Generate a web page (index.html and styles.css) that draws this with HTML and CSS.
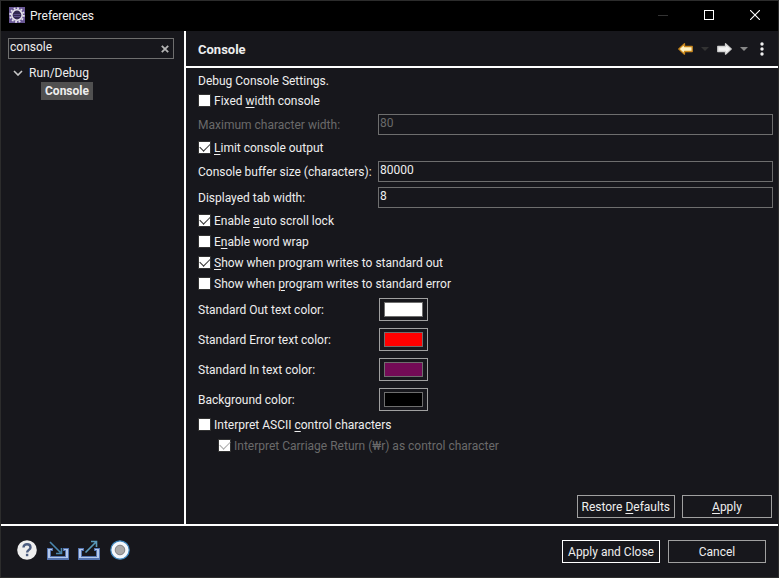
FILE: index.html
```html
<!DOCTYPE html>
<html lang="en">
<head>
    <meta charset="UTF-8">
    <meta name="viewport" content="width=device-width, initial-scale=1.0">
    <title>Preferences</title>
    <link rel="stylesheet" href="styles.css">
</head>
<body>
    <div class="window">
        <header class="title-bar">
            <svg class="app-icon" width="16" height="16" viewBox="0 0 16 16">
                <rect width="16" height="16" fill="#6a5896"/>
                <circle cx="8" cy="8" r="6.8" fill="none" stroke="#e8e6ee" stroke-width="1.8" stroke-dasharray="1.8 1.76"/>
                <circle cx="8" cy="8" r="5.2" fill="#33294f" stroke="#e8e6ee" stroke-width="1.6"/>
                <path d="M4.5 7.5h7M4.5 9.5h7" stroke="#5d5088"/>
            </svg>
            <h1>Preferences</h1>
            <div class="window-buttons">
                <button type="button" aria-label="Minimize" disabled>
                    <svg width="10" height="10" viewBox="0 0 10 10"><path d="M0 5.5h10" stroke="#333"/></svg>
                </button>
                <button type="button" aria-label="Maximize">
                    <svg width="10" height="10" viewBox="0 0 10 10"><rect x=".5" y=".5" width="9" height="9" fill="none" stroke="#fff"/></svg>
                </button>
                <button type="button" aria-label="Close">
                    <svg width="10" height="10" viewBox="0 0 10 10"><path d="M0 0l10 10M10 0L0 10" stroke="#fff" stroke-width="1.1"/></svg>
                </button>
            </div>
        </header>

        <div class="content">
            <nav class="sidebar">
                <div class="filter">
                    <input type="text" value="console" aria-label="Filter preferences">
                    <button type="button" aria-label="Clear">
                        <svg width="8" height="8" viewBox="0 0 8 8"><path d="M.8 .8l6.4 6.4M7.2 .8L.8 7.2" stroke="#b4b4b4" stroke-width="1.8"/></svg>
                    </button>
                </div>
                <ul class="tree">
                    <li>
                        <a href="#" class="tree-item">
                            <svg width="10" height="6" viewBox="0 0 10 6"><path d="M1 1l4 4 4-4" fill="none" stroke="#c8c8c8" stroke-width="1.6"/></svg>
                            Run/Debug
                        </a>
                        <ul>
                            <li><a href="#" class="tree-item selected">Console</a></li>
                        </ul>
                    </li>
                </ul>
            </nav>

            <main class="page">
                <div class="page-header">
                    <h2>Console</h2>
                    <div class="toolbar">
                        <button type="button" aria-label="Back">
                            <svg width="15" height="12" viewBox="0 0 15 12"><path d="M.8 6L6.5.8v2.7h7.7v5H6.5v2.7z" fill="#fff3c4" stroke="#c8861c" stroke-width="1.3" stroke-linejoin="round"/></svg>
                        </button>
                        <button type="button" aria-label="Back history" disabled>
                            <svg width="8" height="4" viewBox="0 0 8 4"><path d="M0 0h8L4 4z" fill="#333"/></svg>
                        </button>
                        <button type="button" aria-label="Forward">
                            <svg width="15" height="12" viewBox="0 0 15 12"><path d="M14.2 6L8.5.8v2.7H.8v5h7.7v2.7z" fill="#f4f4f4" stroke="#d0d0d0" stroke-width="1.3" stroke-linejoin="round"/></svg>
                        </button>
                        <button type="button" aria-label="Forward history">
                            <svg width="8" height="4" viewBox="0 0 8 4"><path d="M0 0h8L4 4z" fill="#888"/></svg>
                        </button>
                        <button type="button" class="menu" aria-label="Menu">
                            <svg width="4" height="14" viewBox="0 0 4 14" fill="#f0f0f0"><circle cx="2" cy="2" r="1.7"/><circle cx="2" cy="7" r="1.7"/><circle cx="2" cy="12" r="1.7"/></svg>
                        </button>
                    </div>
                </div>

                <form class="settings">
                    <p>Debug Console Settings.</p>
                    <label class="check"><input type="checkbox"><span>Fixed <u>w</u>idth console</span></label>
                    <div class="field disabled">
                        <label for="max-width">Maximum character width:</label>
                        <input type="text" id="max-width" value="80" disabled>
                    </div>
                    <label class="check"><input type="checkbox" checked><span><u>L</u>imit console output</span></label>
                    <div class="field">
                        <label for="buffer-size">Console buffer size (characters):</label>
                        <input type="text" id="buffer-size" value="80000">
                    </div>
                    <div class="field">
                        <label for="tab-width">Displayed tab width:</label>
                        <input type="text" id="tab-width" value="8">
                    </div>
                    <label class="check"><input type="checkbox" checked><span>Enable <u>a</u>uto scroll lock</span></label>
                    <label class="check"><input type="checkbox"><span>E<u>n</u>able word wrap</span></label>
                    <label class="check"><input type="checkbox" checked><span><u>S</u>how when program writes to standard out</span></label>
                    <label class="check"><input type="checkbox"><span>Show when <u>p</u>rogram writes to standard error</span></label>
                    <div class="field color">
                        <label for="out-color">Standard Out text color:</label>
                        <input type="color" id="out-color" value="#ffffff">
                    </div>
                    <div class="field color">
                        <label for="err-color">Standard Error text color:</label>
                        <input type="color" id="err-color" value="#ff0000">
                    </div>
                    <div class="field color">
                        <label for="in-color">Standard In text color:</label>
                        <input type="color" id="in-color" value="#730b56">
                    </div>
                    <div class="field color">
                        <label for="bg-color">Background color:</label>
                        <input type="color" id="bg-color" value="#000000">
                    </div>
                    <label class="check"><input type="checkbox"><span>Interpret ASCII <u>c</u>ontrol characters</span></label>
                    <label class="check nested disabled"><input type="checkbox" checked disabled><span>Interpret Carriage Return (₩r) as control character</span></label>
                </form>

                <div class="page-buttons">
                    <button type="button" class="btn">Restore <u>D</u>efaults</button>
                    <button type="button" class="btn"><u>A</u>pply</button>
                </div>
            </main>
        </div>

        <footer class="bottom-bar">
            <div class="tools">
                <button type="button" aria-label="Help">
                    <svg width="22" height="22" viewBox="0 0 22 22">
                        <circle cx="11" cy="11" r="9.8" fill="#eee"/>
                        <path d="M7.5 8.4c0-4.3 7-4.3 7 0 0 2.4-3.4 2.6-3.4 5.2" fill="none" stroke="#4c5d80" stroke-width="2.4"/>
                        <rect x="9.9" y="14.8" width="2.4" height="2.4" fill="#4c5d80"/>
                    </svg>
                </button>
                <button type="button" aria-label="Import">
                    <svg width="22" height="22" viewBox="0 0 22 22">
                        <path d="M0 9h6v3H4v5h14v-5h-2V9h6v12H0z" fill="#5474b0"/>
                        <path d="M1 10h4v1H3v7h16v-7h-2v-1h4v9H1z" fill="#b4c8ea"/>
                        <path d="M3 3l10.5 10.5M14.5 9v5.5H9" fill="none" stroke="#4a86ae" stroke-width="1.6"/>
                    </svg>
                </button>
                <button type="button" aria-label="Export">
                    <svg width="22" height="22" viewBox="0 0 22 22">
                        <path d="M0 9h6v3H4v5h14v-5h-2V9h6v12H0z" fill="#5474b0"/>
                        <path d="M1 10h4v1H3v7h16v-7h-2v-1h4v9H1z" fill="#b4c8ea"/>
                        <path d="M7.5 13.5L18 3M13 2.5h5.5V8" fill="none" stroke="#5a9aba" stroke-width="1.6"/>
                    </svg>
                </button>
                <button type="button" aria-label="Recorder">
                    <svg width="22" height="22" viewBox="0 0 22 22">
                        <circle cx="11" cy="11" r="9.2" fill="#f4f8fc" stroke="#3f86bd" stroke-width="1.2"/>
                        <circle cx="11" cy="11" r="4.8" fill="#a8a8a8" stroke="#808080"/>
                    </svg>
                </button>
            </div>
            <button type="button" class="btn default">Apply and Close</button>
            <button type="button" class="btn">Cancel</button>
        </footer>
    </div>
</body>
</html>
```
FILE: styles.css
```css
* {
    margin: 0;
    padding: 0;
    box-sizing: border-box;
}

body {
    background: #17171c;
    color: #eee;
    font-family: Roboto, "Noto Sans CJK KR", sans-serif;
    font-size: 12px;
    line-height: 20px;
}

button,
input {
    font: inherit;
    color: inherit;
    background: none;
    border: none;
    outline: none;
}

svg {
    display: block;
}

u {
    text-underline-offset: 2px;
}

.window {
    min-height: 100vh;
    display: flex;
    flex-direction: column;
    border: 1px solid #2c2c2c;
}

/* Title bar */
.title-bar {
    display: flex;
    align-items: center;
    height: 30px;
    padding: 0 0 2px 8px;
    gap: 5px;
    background: #000;
}

.title-bar h1 {
    flex: 1;
    padding-top: 2px;
    font-size: 12px;
    font-weight: 400;
}

.window-buttons {
    display: flex;
}

.window-buttons button {
    width: 46px;
    height: 28px;
    display: flex;
    align-items: center;
    justify-content: center;
}

/* Main area */
.content {
    flex: 1;
    display: flex;
    border-bottom: 2px solid #fff;
}

.sidebar {
    width: 185px;
    padding: 7px 10px 7px 7px;
    border-right: 2px solid #fff;
}

.filter {
    display: flex;
    align-items: center;
    height: 21px;
    padding-right: 4px;
    border: 1px solid #6e6e6e;
}

.filter input {
    flex: 1;
    min-width: 0;
    height: 19px;
    padding: 0 1px 3px;
    line-height: 16px;
}

.tree {
    margin-top: 5px;
    list-style: none;
}

.tree ul {
    list-style: none;
    padding-left: 33px;
}

.tree-item {
    display: flex;
    align-items: center;
    width: fit-content;
    height: 18px;
    gap: 6px;
    padding-left: 5px;
    color: #eee;
    text-decoration: none;
}

.tree-item.selected {
    padding: 0 4px;
    background: #505050;
    font-weight: 700;
}

.page {
    flex: 1;
    display: flex;
    flex-direction: column;
}

.page-header {
    display: flex;
    align-items: center;
    justify-content: space-between;
    height: 37px;
    padding: 0 14px 0 12px;
    border-bottom: 2px solid #fff;
}

.page-header h2 {
    padding-top: 2px;
    font-size: 13px;
    font-weight: 700;
}

.toolbar {
    display: flex;
    align-items: center;
    gap: 8px;
}

.toolbar .menu {
    margin-left: 4px;
}

/* Settings form */
.settings {
    flex: 1;
    padding: 3px 5px 0 12px;
}

.settings p {
    height: 19px;
}

.check {
    display: flex;
    align-items: center;
    width: fit-content;
    height: 21px;
    gap: 3px;
}

.check.nested {
    margin-left: 20px;
}

.check input {
    appearance: none;
    width: 13px;
    height: 13px;
    background: #fff;
    border: 1px solid #333;
}

.check input:checked::before {
    content: "";
    display: block;
    width: 9px;
    height: 5px;
    margin: 2px 0 0 1px;
    border: solid #333;
    border-width: 0 0 1px 1px;
    transform: translateY(-1px) rotate(-45deg);
}

.disabled {
    color: #6a6a6a;
}

.check input:disabled::before {
    border-color: #aaa;
}

.field {
    display: grid;
    grid-template-columns: 180px 1fr;
    align-items: center;
    height: 26px;
}

.field label {
    padding-top: 2px;
}

.field input[type="text"] {
    height: 21px;
    padding: 0 1px 3px;
    border: 1px solid #6e6e6e;
    line-height: 16px;
}

.field.color {
    height: 30px;
}

.field input[type="color"] {
    appearance: none;
    width: 49px;
    height: 23px;
    margin-left: 1px;
    padding: 3px 4px;
    border: 1px solid #a0a0a0;
}

input[type="color"]::-webkit-color-swatch-wrapper {
    padding: 0;
}

input[type="color"]::-webkit-color-swatch {
    border: 1px solid #6e6e6e;
}

/* Buttons */
.btn {
    height: 23px;
    min-width: 90px;
    padding: 0 4px;
    border: 1px solid #a0a0a0;
}

.btn.default {
    border-color: #fff;
}

.page-buttons {
    display: flex;
    justify-content: flex-end;
    gap: 7px;
    padding: 6px;
}

.bottom-bar {
    display: flex;
    align-items: center;
    height: 51px;
    gap: 8px;
    padding: 0 12px 0 15px;
}

.bottom-bar .btn {
    min-width: 98px;
}

.tools {
    flex: 1;
    display: flex;
    gap: 9px;
    padding-bottom: 3px;
}
```
